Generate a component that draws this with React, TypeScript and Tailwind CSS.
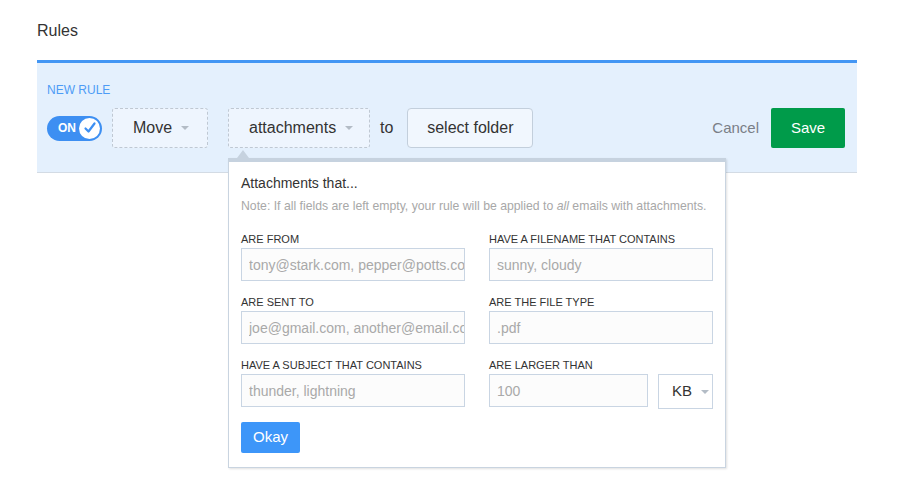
import React from "react";

function Caret() {
  return (
    <span className="inline-block w-0 h-0 border-l-[4px] border-r-[4px] border-t-[4px] border-l-transparent border-r-transparent border-t-[#b3bcc6]" />
  );
}

function Field({ label, placeholder }: { label: string; placeholder: string }) {
  return (
    <div className="flex flex-col">
      <div className="text-[11px] leading-[13px] mb-[2px] text-[#333] uppercase">{label}</div>
      <input
        readOnly
        placeholder={placeholder}
        className="w-full h-[33px] border border-[#c9d5e3] bg-[#fcfcfc] pl-[7px] pr-0 text-[14px] text-[#333] placeholder:text-[#a9a9a9] outline-none font-['Liberation_Sans',Arial,sans-serif]"
      />
    </div>
  );
}

export default function App() {
  return (
    <div className="w-[903px] h-[483px] bg-white font-['Liberation_Sans',Arial,sans-serif] text-[#333] pl-[37px] pt-[21px]">
      <div className="text-[16px] leading-[19px] text-[#333]">Rules</div>
      <div className="mt-[20px] w-[820px] border-t-[3px] border-t-[#4396f4] border-b border-b-[#d3dbe4] bg-[#e4f0fd] pl-[10px] pr-[12px] pt-[20px] pb-[24px]">
        <div className="text-[12px] leading-[14px] text-[#4d9cf6] uppercase">New Rule</div>
        <div className="mt-[11px] flex items-center h-[40px]">
          {/* toggle */}
          <div className="w-[55px] h-[25px] rounded-full bg-[#3d8ff2] flex items-center justify-between pl-[11px] pr-[2px]">
            <span className="text-[12px] font-bold text-white leading-none">ON</span>
            <span className="w-[21px] h-[21px] rounded-full bg-white flex items-center justify-center">
              <svg width="14" height="14" viewBox="0 0 14 14" fill="none">
                <path d="M2.5 7.5 L5.5 10.5 L11.5 2.5" stroke="#3d8ff2" strokeWidth="2.2" strokeLinecap="round" strokeLinejoin="round" />
              </svg>
            </span>
          </div>
          {/* Move */}
          <div className="ml-[10px] h-[40px] w-[96px] border border-dashed border-[#bfc8d3] rounded-[3px] bg-[#eef5fe] flex items-center pl-[20px] gap-[9px] text-[16px] text-[#333]">
            <span>Move</span>
            <Caret />
          </div>
          {/* attachments */}
          <div className="relative ml-[20px]">
            <div className="h-[40px] w-[142px] border border-dashed border-[#bfc8d3] rounded-[3px] bg-[#eef5fe] flex items-center pl-[20px] gap-[9px] text-[16px] text-[#333]">
              <span>attachments</span>
              <Caret />
            </div>
            {/* popover */}
            <div className="absolute left-0 top-[50px] z-10 w-[498px] bg-white border border-[#c9d4e0] border-t-[4px] border-t-[#c6d2df] shadow-[1px_1px_2px_rgba(0,0,0,0.12)] px-[12px] pt-[13px] pb-[14px]">
              <span className="absolute left-[8px] top-[-12px] w-0 h-0 border-l-[6px] border-r-[6px] border-b-[8px] border-l-transparent border-r-transparent border-b-[#c6d2df]" />
              <div className="text-[14px] leading-[17px] text-[#333]">Attachments that...</div>
              <div className="mt-[7px] text-[12.25px] leading-[15px] text-[#a8a8a8] whitespace-nowrap">
                Note: If all fields are left empty, your rule will be applied to <i>all</i> emails with attachments.
              </div>
              <div className="mt-[19px] grid grid-cols-[224px_224px] gap-x-[24px] gap-y-[15px]">
                <Field label="Are from" placeholder="tony@stark.com, pepper@potts.com" />
                <Field label="Have a filename that contains" placeholder="sunny, cloudy" />
                <Field label="Are sent to" placeholder="joe@gmail.com, another@email.com" />
                <Field label="Are the file type" placeholder=".pdf" />
                <Field label="Have a subject that contains" placeholder="thunder, lightning" />
                <div className="flex flex-col">
                  <div className="text-[11px] leading-[13px] mb-[2px] text-[#333] uppercase">Are larger than</div>
                  <div className="flex gap-[10px]">
                    <input
                      readOnly
                      placeholder="100"
                      className="w-[159px] h-[33px] border border-[#c9d5e3] bg-[#fcfcfc] px-[7px] text-[14px] placeholder:text-[#a9a9a9] outline-none font-['Liberation_Sans',Arial,sans-serif]"
                    />
                    <div className="w-[55px] h-[35px] border border-[#c9d5e3] bg-white flex items-center pl-[13px] gap-[9px] text-[15px] text-[#333]">
                      <span>KB</span>
                      <Caret />
                    </div>
                  </div>
                </div>
              </div>
              <button className="mt-[13px] w-[59px] h-[31px] bg-[#3d96f9] rounded-[2px] text-white text-[15px] flex items-center justify-center">
                Okay
              </button>
            </div>
          </div>
          <span className="ml-[10px] text-[16px] text-[#333]">to</span>
          <div className="ml-[14px] h-[40px] w-[126px] border border-[#c3cfdc] rounded-[4px] bg-[#f1f7fe] flex items-center justify-center text-[16px] text-[#333]">
            select folder
          </div>
          <div className="flex-1" />
          <span className="text-[15px] text-[#7a7f87]">Cancel</span>
          <button className="ml-[12px] h-[40px] w-[74px] bg-[#009b4a] rounded-[2px] text-white text-[15px] flex items-center justify-center">
            Save
          </button>
        </div>
      </div>
    </div>
  );
}
